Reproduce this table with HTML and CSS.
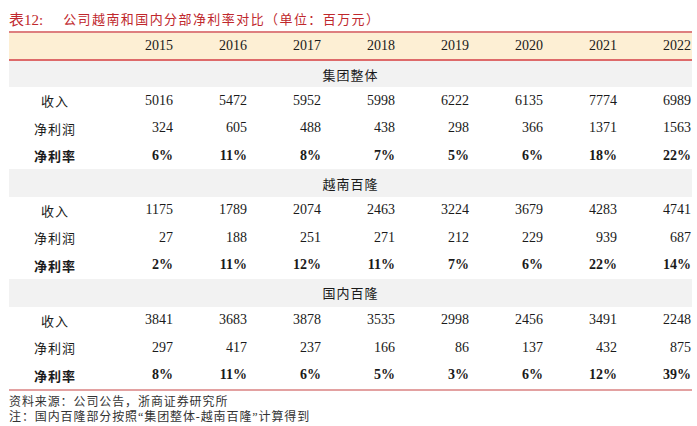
FILE: index.html
```html
<!DOCTYPE html>
<html lang="zh">
<head>
<meta charset="utf-8">
<link rel="stylesheet" href="styles.css">
</head>
<body>
<div class="page">
  <div class="title"><span class="tag">表12:</span><span class="caption">公司越南和国内分部净利率对比（单位：百万元）</span></div>
  <div class="table">
    <div class="row head">
      <div class="lab"></div>
      <div class="num">2015</div><div class="num">2016</div><div class="num">2017</div><div class="num">2018</div><div class="num">2019</div><div class="num">2020</div><div class="num">2021</div><div class="num">2022</div>
    </div>
    <div class="section first">集团整体</div>
    <div class="row"><div class="lab">收入</div><div class="num">5016</div><div class="num">5472</div><div class="num">5952</div><div class="num">5998</div><div class="num">6222</div><div class="num">6135</div><div class="num">7774</div><div class="num">6989</div></div>
    <div class="row"><div class="lab">净利润</div><div class="num">324</div><div class="num">605</div><div class="num">488</div><div class="num">438</div><div class="num">298</div><div class="num">366</div><div class="num">1371</div><div class="num">1563</div></div>
    <div class="row bold"><div class="lab">净利率</div><div class="num">6%</div><div class="num">11%</div><div class="num">8%</div><div class="num">7%</div><div class="num">5%</div><div class="num">6%</div><div class="num">18%</div><div class="num">22%</div></div>
    <div class="section">越南百隆</div>
    <div class="row"><div class="lab">收入</div><div class="num">1175</div><div class="num">1789</div><div class="num">2074</div><div class="num">2463</div><div class="num">3224</div><div class="num">3679</div><div class="num">4283</div><div class="num">4741</div></div>
    <div class="row"><div class="lab">净利润</div><div class="num">27</div><div class="num">188</div><div class="num">251</div><div class="num">271</div><div class="num">212</div><div class="num">229</div><div class="num">939</div><div class="num">687</div></div>
    <div class="row bold"><div class="lab">净利率</div><div class="num">2%</div><div class="num">11%</div><div class="num">12%</div><div class="num">11%</div><div class="num">7%</div><div class="num">6%</div><div class="num">22%</div><div class="num">14%</div></div>
    <div class="section">国内百隆</div>
    <div class="row"><div class="lab">收入</div><div class="num">3841</div><div class="num">3683</div><div class="num">3878</div><div class="num">3535</div><div class="num">2998</div><div class="num">2456</div><div class="num">3491</div><div class="num">2248</div></div>
    <div class="row"><div class="lab">净利润</div><div class="num">297</div><div class="num">417</div><div class="num">237</div><div class="num">166</div><div class="num">86</div><div class="num">137</div><div class="num">432</div><div class="num">875</div></div>
    <div class="row bold"><div class="lab">净利率</div><div class="num">8%</div><div class="num">11%</div><div class="num">6%</div><div class="num">5%</div><div class="num">3%</div><div class="num">6%</div><div class="num">12%</div><div class="num">39%</div></div>
  </div>
  <div class="notes">
    <div class="note">资料来源：公司公告，浙商证券研究所</div>
    <div class="note">注：国内百隆部分按照“集团整体-越南百隆”计算得到</div>
  </div>
</div>
</body>
</html>
```
FILE: styles.css
```css
html, body {
  margin: 0;
  padding: 0;
  background: #ffffff;
}
.page {
  padding-left: 9px;
  width: 683px;
  font-family: "Liberation Serif", "Noto Sans CJK SC", serif;
  color: #1a1a1a;
}
.title {
  height: 31px;
  box-sizing: border-box;
  padding-top: 9px;
  line-height: 16px;
  color: #c0282d;
  display: flex;
  align-items: center;
  font-size: 14px;
}
.title .tag {
  font-size: 15px;
}
.title .caption {
  margin-left: 20px;
  font-size: 13px;
  letter-spacing: 1.42px;
}
.table {
  border-bottom: 2px solid #e3a1a1;
}
.row {
  display: grid;
  grid-template-columns: 91px repeat(8, 74px);
  height: 27.45px;
  align-items: center;
  font-size: 14px;
}
.row.head {
  height: 26px;
  background: #fdefd4;
  border-top: 2px solid #de7f7f;
  border-bottom: 2px solid #de6a6a;
}
.lab {
  text-align: center;
  font-size: 13px;
  letter-spacing: 1px;
  padding-left: 1px;
}
.num {
  text-align: right;
  padding-right: 1px;
}
.row.bold {
  font-weight: bold;
}
.section {
  height: 27.45px;
  background: #f2f2f2;
  display: flex;
  align-items: center;
  justify-content: center;
  font-size: 13px;
  letter-spacing: 1px;
}
.section.first {
  height: 26px;
}
.notes {
  padding-top: 4px;
  font-size: 12px;
  line-height: 15.5px;
  color: #333333;
  letter-spacing: 0.9px;
}
```
